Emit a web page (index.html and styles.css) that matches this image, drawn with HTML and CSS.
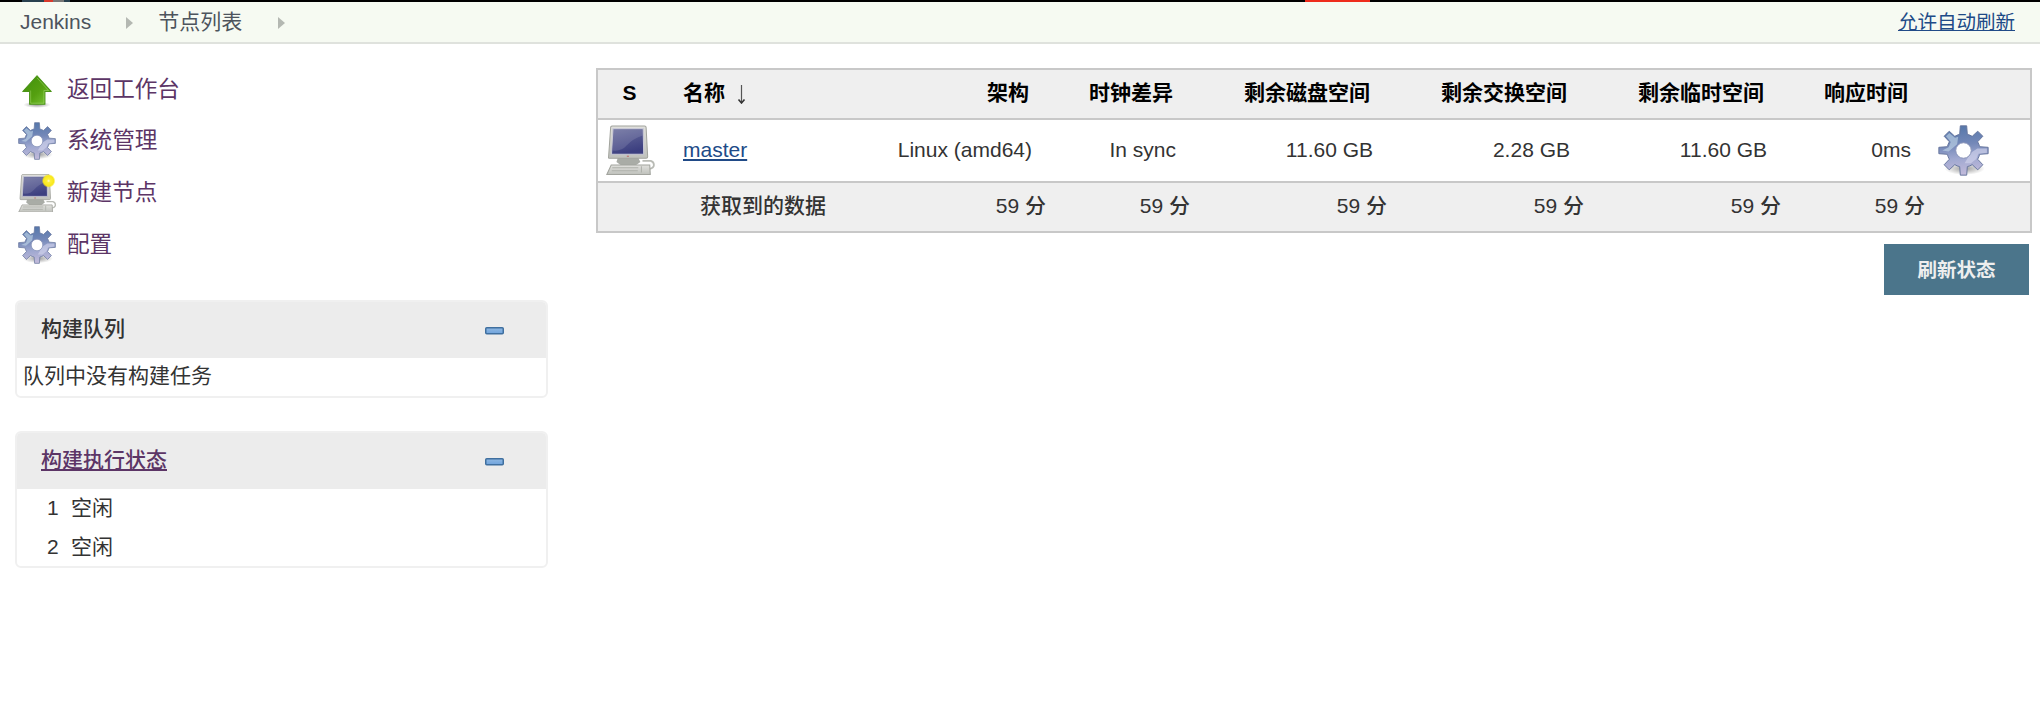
FILE: index.html
```
<!DOCTYPE html>
<html lang="zh-CN">
<head>
<meta charset="utf-8">
<title>节点列表 [Jenkins]</title>
<link rel="stylesheet" href="styles.css">
</head>
<body>
<svg width="0" height="0" class="defs" aria-hidden="true">
  <defs>
    <linearGradient id="gearFill" x1="0.4" y1="0" x2="0.5" y2="1">
      <stop offset="0" stop-color="#5577aa"/><stop offset="0.38" stop-color="#7488b8"/><stop offset="0.65" stop-color="#9fa8d0"/><stop offset="1" stop-color="#c3bbdb"/>
    </linearGradient>
    <linearGradient id="screenFill" x1="0" y1="0" x2="0.3" y2="1">
      <stop offset="0" stop-color="#6b6f9e"/><stop offset="1" stop-color="#3c3f80"/>
    </linearGradient>
    <linearGradient id="caseFill" x1="0" y1="0" x2="0" y2="1">
      <stop offset="0" stop-color="#e0e0dc"/><stop offset="1" stop-color="#bfc1bc"/>
    </linearGradient>
    <linearGradient id="arrowFill" x1="0" y1="0" x2="1" y2="1">
      <stop offset="0" stop-color="#3f8f0c"/><stop offset="0.55" stop-color="#55a010"/><stop offset="1" stop-color="#7cc73c"/>
    </linearGradient>
    <linearGradient id="minusFill" x1="0" y1="0" x2="0" y2="1">
      <stop offset="0" stop-color="#8fb8e2"/><stop offset="1" stop-color="#6fa3dd"/>
    </linearGradient>
    <radialGradient id="shade"><stop offset="0" stop-color="#000" stop-opacity=".4"/><stop offset="1" stop-color="#000" stop-opacity="0"/></radialGradient>
    <radialGradient id="starFill"><stop offset="0" stop-color="#fffbd0"/><stop offset=".25" stop-color="#fdf03a"/><stop offset=".75" stop-color="#f8e71c"/><stop offset="1" stop-color="#f8e71c" stop-opacity="0"/></radialGradient>
    <symbol id="gear" viewBox="0 0 48 48">
      <ellipse cx="25" cy="41" rx="19" ry="6" fill="url(#shade)"/>
      <path fill="url(#gearFill)" stroke="#65759c" stroke-width=".9" stroke-linejoin="round" d="M21 .8H27L27.600 8.800A15.500 15.500 0 0 1 32.200 10.700L37.400 5.800L42.200 10.600L37.300 15.800A15.500 15.500 0 0 1 39.200 20.400L47.200 21V27L39.200 27.600A15.500 15.500 0 0 1 37.300 32.200L42.200 37.400L37.400 42.200L32.200 37.300A15.500 15.500 0 0 1 27.600 39.200L27 47.200H21L20.400 39.200A15.500 15.500 0 0 1 15.800 37.300L10.600 42.200L5.800 37.400L10.700 32.200A15.500 15.500 0 0 1 8.800 27.600L.8 27V21L8.800 20.400A15.500 15.500 0 0 1 10.700 15.800L5.800 10.600L10.600 5.800L15.800 10.700A15.500 15.500 0 0 1 20.400 8.800Z"/>
      <path fill="#c3d8ea" opacity=".6" d="M10.600 7.500L16 12L19 11L18 18L10 25L4 24L10 21L12 16L7.500 10.600z"/>
      <path fill="#d5d7ee" opacity=".6" d="M31 26L37 22L46 22V26L38 27L36 32L31 36L25 36z"/>
      <circle cx="24" cy="24" r="7.300" fill="#fff" stroke="#8792b7" stroke-width=".9"/>
    </symbol>
    <symbol id="computer" viewBox="0 0 48 48">
      <ellipse cx="22" cy="46" rx="21" ry="2" fill="url(#shade)"/>
      <path d="M35 34h8q3 1 3 4t-5 4h-4" fill="none" stroke="#b9bbb5" stroke-width="1.700"/>
      <path d="M12 29h18l3 6-4 3H14l-4-3z" fill="#a9aca6"/>
      <path d="M4.500 1.500Q5 .5 6 .5h31q1.500 0 1.500 1.500L40 30q0 1.500-1.500 1.500h-35Q2 31.500 2.500 30z" fill="url(#caseFill)" stroke="#a2a49e"/>
      <path d="M6.700 3h29l.5 24.500H5.300z" fill="url(#screenFill)" stroke="#c9c9d6"/>
      <path d="M7 4h28l.2 5.500Q25 13 20 19T6.500 24z" fill="#fff" opacity=".12"/>
      <path d="M5 38h37l.5 9H.8z" fill="url(#caseFill)" stroke="#a2a49e"/>
      <path d="M6 40.500h25M5.500 43.500h25M34 39v6" stroke="#aeb1aa" stroke-width="1" fill="none"/>
      <path d="M20 29.500h2" stroke="#b66" stroke-width="1"/>
    </symbol>
    <symbol id="minus" viewBox="0 0 19 8">
      <rect x=".75" y=".75" width="17.500" height="6" rx="1" fill="url(#minusFill)" stroke="#3f6f9f" stroke-width="1.500"/>
    </symbol>
  </defs>
</svg>

<div class="topstrip"><span class="topstrip-tabs"></span><span class="topstrip-red"></span></div>
<header class="breadcrumbs">
  <span class="crumb">Jenkins</span>
  <svg class="sep sep-first" viewBox="0 0 7 12"><path d="M0 0l7 6-7 6z" fill="#b4b8b2"/></svg>
  <span class="crumb">节点列表</span>
  <svg class="sep sep-last" viewBox="0 0 7 12"><path d="M0 0l7 6-7 6z" fill="#b4b8b2"/></svg>
  <a class="auto-refresh">允许自动刷新</a>
</header>

<div class="page">
  <aside class="side">
    <nav class="tasks">
      <a class="task"><svg class="task-icon" viewBox="0 0 36 36"><ellipse cx="18" cy="32" rx="13" ry="3" fill="url(#shade)"/><path d="M18 4.500L31.500 19.500h-6v12h-14.500v-12H4.500z" fill="url(#arrowFill)" stroke="#4b9418" stroke-linejoin="round"/><path d="M18 6.500L29 18.500h-4.500v12h-12.500v-12" fill="none" stroke="#a5d96e" stroke-width=".8" opacity=".6"/></svg>返回工作台</a>
      <a class="task"><svg class="task-icon"><use href="#gear"/></svg>系统管理</a>
      <a class="task"><svg class="task-icon" viewBox="0 0 36 36"><use href="#computer" x="0" y="0" width="37" height="37"/><circle cx="29" cy="6.500" r="6.500" fill="url(#starFill)"/></svg>新建节点</a>
      <a class="task"><svg class="task-icon"><use href="#gear"/></svg>配置</a>
    </nav>
    <section class="pane pane-queue">
      <div class="pane-head"><span>构建队列</span><svg class="minus"><use href="#minus"/></svg></div>
      <div class="queue-empty">队列中没有构建任务</div>
    </section>
    <section class="pane pane-exec">
      <div class="pane-head"><a class="pane-link">构建执行状态</a><svg class="minus"><use href="#minus"/></svg></div>
      <div class="executors">
        <div class="executor"><span class="num">1</span><span>空闲</span></div>
        <div class="executor"><span class="num">2</span><span>空闲</span></div>
      </div>
    </section>
  </aside>

  <main class="main">
    <table class="nodes">
      <colgroup><col class="c-s"><col class="c-name"><col class="c-arch"><col class="c-clock"><col class="c-space"><col class="c-space"><col class="c-space"><col class="c-resp"><col></colgroup>
      <thead>
        <tr><th class="status">S</th><th class="name">名称 <svg class="sort" viewBox="0 0 9 19"><path d="M4.500 0v17" stroke="#555" stroke-width="1.200"/><path d="M1.500 14.500l3 3.500 3-3.500" fill="none" stroke="#333" stroke-width="1.600"/></svg></th><th>架构</th><th>时钟差异</th><th>剩余磁盘空间</th><th>剩余交换空间</th><th>剩余临时空间</th><th>响应时间</th><th></th></tr>
      </thead>
      <tbody>
        <tr><td class="status"><svg class="node-icon"><use href="#computer"/></svg></td><td class="name"><a class="node-link">master</a></td><td>Linux (amd64)</td><td>In sync</td><td>11.60 GB</td><td>2.28 GB</td><td>11.60 GB</td><td>0ms</td><td class="config"><svg class="config-icon"><use href="#gear"/></svg></td></tr>
      </tbody>
      <tfoot>
        <tr><td></td><td class="name">获取到的数据</td><td>59 分</td><td>59 分</td><td>59 分</td><td>59 分</td><td>59 分</td><td>59 分</td><td></td></tr>
      </tfoot>
    </table>
    <button class="refresh">刷新状态</button>
  </main>
</div>
</body>
</html>
```
FILE: styles.css
```
* { box-sizing: border-box; }
body {
  margin: 0;
  background: #fff;
  color: #333;
  font: 21px/30px "Liberation Sans", "Noto Sans CJK SC", sans-serif;
}
svg { display: block; flex: none; }
.defs { position: absolute; }

.topstrip { display: flex; height: 2px; background: #000; }
.topstrip-tabs { width: 48px; margin-left: 22px; background: linear-gradient(90deg, #28404f 0 46%, #d8392b 46% 64%, #777 64% 88%, #28404f 88%); }
.topstrip-red { width: 65px; margin-left: 1235px; background: #ee2c1c; }

.breadcrumbs {
  display: flex;
  align-items: center;
  height: 42px;
  padding: 0 25px 0 20px;
  background: #f6faf2;
  border-bottom: 2px solid #dfe2dd;
  color: #4d545d;
}
.sep { width: 7px; height: 12px; margin-top: 2px; }
.sep-first { margin: 2px 25px 0 35px; }
.sep-last { margin-left: 36px; }
.auto-refresh {
  margin-left: auto;
  font-size: 19.5px;
  color: #204a87;
  text-decoration: underline;
}

.page { display: flex; }
.side { width: 548px; padding: 20px 0 0 15px; }
.tasks { display: flex; flex-direction: column; }
.task {
  display: flex;
  align-items: center;
  gap: 11px;
  height: 51.6px;
  padding-left: 3px;
  font-size: 22.6px;
  color: #5c3566;
}
.task-icon { width: 38px; height: 38px; }

.pane { border: 2px solid #f0f0f0; border-radius: 6px; overflow: hidden; }
.pane-queue { height: 98px; margin-top: 30px; }
.pane-exec { height: 137px; margin-top: 33px; }
.pane-head {
  display: flex;
  align-items: center;
  justify-content: space-between;
  height: 56px;
  padding: 0 42px 3px 24px;
  background: #ececec;
  font-weight: 500;
}
.pane-link { color: #5c3566; text-decoration: underline; }
.minus { width: 19px; height: 8px; margin-top: 5px; }
.queue-empty { padding: 3px 6px; }
.executors { padding-left: 30px; margin-top: -1px; }
.executor { display: flex; height: 39px; align-items: center; }
.num { width: 24px; }

.main { display: flex; flex-direction: column; width: 1436px; margin: 24px 0 0 48px; }
.nodes { width: 1436px; table-layout: fixed; border-collapse: collapse; border: 2px solid #c8c8c8; }
.c-s { width: 64px; }
.c-name { width: 192px; }
.c-arch { width: 197px; }
.c-clock { width: 144px; }
.c-space { width: 197px; }
.c-resp { width: 144px; }
.nodes th, .nodes td { padding: 0; text-align: right; white-space: nowrap; }
.nodes tr { border-bottom: 2px solid #c8c8c8; }
.nodes thead tr { height: 50px; background: #efefef; color: #000; }
.nodes tbody tr { height: 63px; }
.nodes tfoot tr { height: 50px; background: #efefef; }
.nodes th { padding: 0 21px 2px 0; font-weight: 700; }
.nodes tbody td { padding: 0 18px 2px 0; }
.nodes tfoot td { padding: 0 4px 3px 0; font-weight: 500; }
.nodes th.name, .nodes tbody td.name { padding-left: 22px; text-align: left; }
.nodes tfoot td.name { padding-left: 39px; text-align: left; }
.nodes th.status { padding: 0 0 2px; text-align: center; }
.nodes tbody td.status { padding: 0 0 0 8px; }
.nodes tbody td.config { padding: 0 0 0 9px; }
.sort { display: inline-block; width: 9px; height: 19px; margin-left: 6px; vertical-align: -4px; }
.node-icon { width: 50px; height: 51px; }
.config-icon { width: 51px; height: 51px; }
.node-link { color: #204a87; text-decoration: underline; }

.refresh {
  align-self: flex-end;
  width: 145px;
  height: 51px;
  margin: 11px 3px 0 0;
  padding: 0 0 2px;
  border: 0;
  background: #4b758b;
  color: #eee;
  font: 700 19.5px "Liberation Sans", "Noto Sans CJK SC", sans-serif;
}
```
